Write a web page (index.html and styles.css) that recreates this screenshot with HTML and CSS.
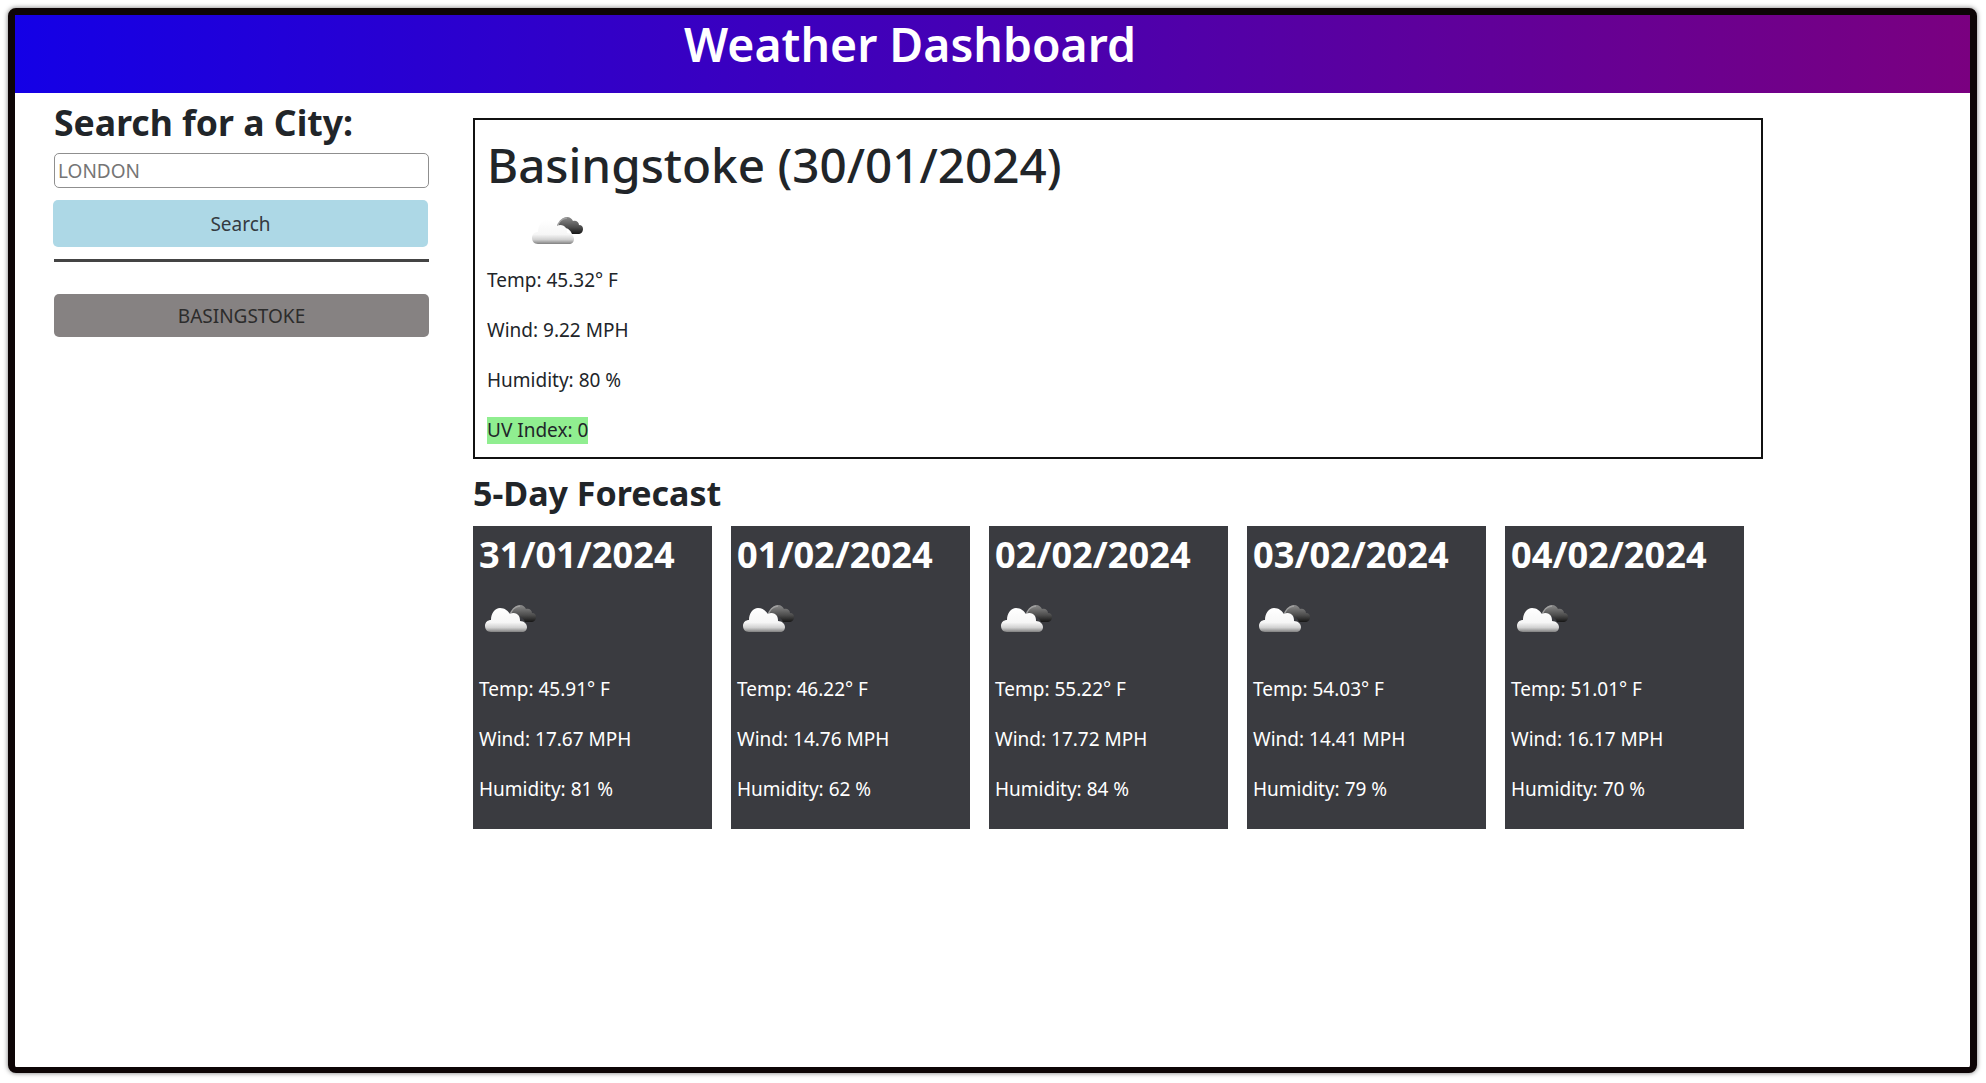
FILE: index.html
```html
<!DOCTYPE html>
<html lang="en">
<head>
  <meta charset="UTF-8" />
  <title>Weather Dashboard</title>
  <link rel="stylesheet" href="styles.css">
</head>
<body>
  <svg class="defs" width="0" height="0">
    <defs>
      <linearGradient id="cloud-front" x1="0" y1="0" x2="0" y2="1">
        <stop offset="0" stop-color="#ffffff" />
        <stop offset="0.6" stop-color="#f6f6f6" />
        <stop offset="0.82" stop-color="#d0d0d0" />
        <stop offset="1" stop-color="#808080" />
      </linearGradient>
      <linearGradient id="cloud-back" x1="0" y1="0" x2="0" y2="1">
        <stop offset="0" stop-color="#8c8c8c" />
        <stop offset="0.6" stop-color="#4d4d4d" />
        <stop offset="1" stop-color="#161616" />
      </linearGradient>
      <symbol id="cloud" viewBox="0 0 52 28">
        <path fill="url(#cloud-back)" d="M26 10C27 4 31 0 35 0c3 0 5 2 6 4 3-1 6 1 6 4 3 0 4 2 4 4 0 3-2 5-5 5h-6c-1-3-4-6-7-6-2-1-5-1-7-1z" />
        <path fill="none" stroke="#a0a0a0" stroke-width="1.3" d="M25 11C26 5 30 1 35 1" />
        <path fill="url(#cloud-front)" d="M6 27c-4 0-6-3-6-6 0-4 3-6 6-6 0-7 4-12 9-12s8 3 10 6c3-2 7-1 9 2 1 2 1 4 1 5 4 0 7 3 7 6s-2 5-5 5H6z" />
      </symbol>
    </defs>
  </svg>

  <div class="frame">
    <header class="top-bar">
      <h1>Weather Dashboard</h1>
    </header>

    <div class="page-body">
      <aside class="search-panel">
        <h3>Search for a City:</h3>
        <input type="text" class="city-input" placeholder="LONDON">
        <button class="search-btn">Search</button>
        <hr>
        <button class="history-btn">BASINGSTOKE</button>
      </aside>

      <main class="weather-panel">
        <section class="current-box">
          <h2>Basingstoke (30/01/2024)</h2>
          <svg class="current-icon"><use href="#cloud" /></svg>
          <p>Temp: 45.32° F</p>
          <p>Wind: 9.22 MPH</p>
          <p>Humidity: 80 %</p>
          <p class="last-row"><span class="uv-low">UV Index: 0</span></p>
        </section>

        <h3 class="forecast-title">5-Day Forecast</h3>
        <div class="forecast-row">
          <div class="day-card">
            <h3>31/01/2024</h3>
            <svg class="day-icon"><use href="#cloud" /></svg>
            <p>Temp: 45.91° F</p>
            <p>Wind: 17.67 MPH</p>
            <p>Humidity: 81 %</p>
          </div>
          <div class="day-card">
            <h3>01/02/2024</h3>
            <svg class="day-icon"><use href="#cloud" /></svg>
            <p>Temp: 46.22° F</p>
            <p>Wind: 14.76 MPH</p>
            <p>Humidity: 62 %</p>
          </div>
          <div class="day-card">
            <h3>02/02/2024</h3>
            <svg class="day-icon"><use href="#cloud" /></svg>
            <p>Temp: 55.22° F</p>
            <p>Wind: 17.72 MPH</p>
            <p>Humidity: 84 %</p>
          </div>
          <div class="day-card">
            <h3>03/02/2024</h3>
            <svg class="day-icon"><use href="#cloud" /></svg>
            <p>Temp: 54.03° F</p>
            <p>Wind: 14.41 MPH</p>
            <p>Humidity: 79 %</p>
          </div>
          <div class="day-card">
            <h3>04/02/2024</h3>
            <svg class="day-icon"><use href="#cloud" /></svg>
            <p>Temp: 51.01° F</p>
            <p>Wind: 16.17 MPH</p>
            <p>Humidity: 70 %</p>
          </div>
        </div>
      </main>
    </div>
  </div>
</body>
</html>
```

FILE: styles.css
```css
* {
  box-sizing: border-box;
}

html, body {
  height: 100%;
}

body {
  font-family: "Noto Sans", Arial, sans-serif;
  font-size: 19px;
  line-height: 30px;
  color: #212529;
  background-color: #fff;
  margin: 0;
  padding: 8px 9px 10px 8px;
  overflow: hidden;
}

.defs {
  position: absolute;
}

.frame {
  height: 100%;
  border: 7px solid #0d0506;
  border-bottom-width: 6px;
  border-radius: 8px;
  box-shadow: 0 0 5px rgba(0,0,0,0.55);
  background: #fff;
}

.top-bar {
  height: 78px;
  padding-left: 669px;
  background: linear-gradient(to right, #1400e6, #7a0080);
}

.top-bar h1 {
  margin: 0;
  font-size: 46.4px;
  line-height: 58px;
  font-weight: 600;
  color: #fff;
}

.page-body {
  display: flex;
  padding: 0 39px;
}

.search-panel {
  width: 375px;
  margin-right: 44px;
  padding-top: 7px;
}

.search-panel h3 {
  margin: 0 0 9px;
  font-size: 35.6px;
  line-height: 44px;
  font-weight: 700;
}

.city-input {
  display: block;
  width: 100%;
  height: 35px;
  padding: 0 3px;
  border: 1px solid #8f8f8f;
  border-radius: 5px;
  font-family: inherit;
  font-size: 19px;
}

.city-input::placeholder {
  color: #757575;
  opacity: 1;
}

.search-btn {
  display: block;
  width: 100%;
  height: 47px;
  margin: 12px 0 0 -1px;
  border: none;
  border-radius: 5px;
  background: #add8e6;
  color: #343a40;
  font-family: inherit;
  font-size: 19px;
}

hr {
  margin: 12px 0 32px;
  border: none;
  border-top: 3px solid #444;
}

.history-btn {
  display: block;
  width: 100%;
  height: 43px;
  border: none;
  border-radius: 5px;
  background: #868282;
  color: #2c2c2c;
  font-family: inherit;
  font-size: 19px;
}

.weather-panel {
  flex: 1;
  padding-top: 25px;
}

.current-box {
  width: 1290px;
  height: 341px;
  padding: 12px;
  border: 2px solid #111;
}

.current-box h2 {
  margin: 3px 0 0;
  font-size: 47.6px;
  line-height: 60px;
  font-weight: 500;
}

.current-icon {
  display: block;
  width: 52px;
  height: 28px;
  margin: 22px 0 0 45px;
  filter: blur(0.4px);
}

p {
  margin: 0 0 20px;
}

.current-box p:first-of-type {
  margin-top: 20px;
}

.current-box .last-row {
  margin: 0;
}

.uv-low {
  display: inline-block;
  line-height: 27px;
  background: #90ee90;
}

.forecast-title {
  margin: 14px 0 0;
  font-size: 34px;
  line-height: 40px;
  font-weight: 700;
}

.forecast-row {
  display: flex;
  gap: 19px;
  margin-top: 13px;
}

.day-card {
  width: 239px;
  height: 303px;
  padding: 6px;
  background: #3a3b40;
  color: #fff;
}

.day-card h3 {
  margin: 0;
  font-size: 36.2px;
  line-height: 44px;
  font-weight: 700;
}

.day-icon {
  display: block;
  width: 52px;
  height: 28px;
  margin: 29px 0 0 6px;
  filter: blur(0.4px);
}

.day-card p:first-of-type {
  margin-top: 41px;
}
```
